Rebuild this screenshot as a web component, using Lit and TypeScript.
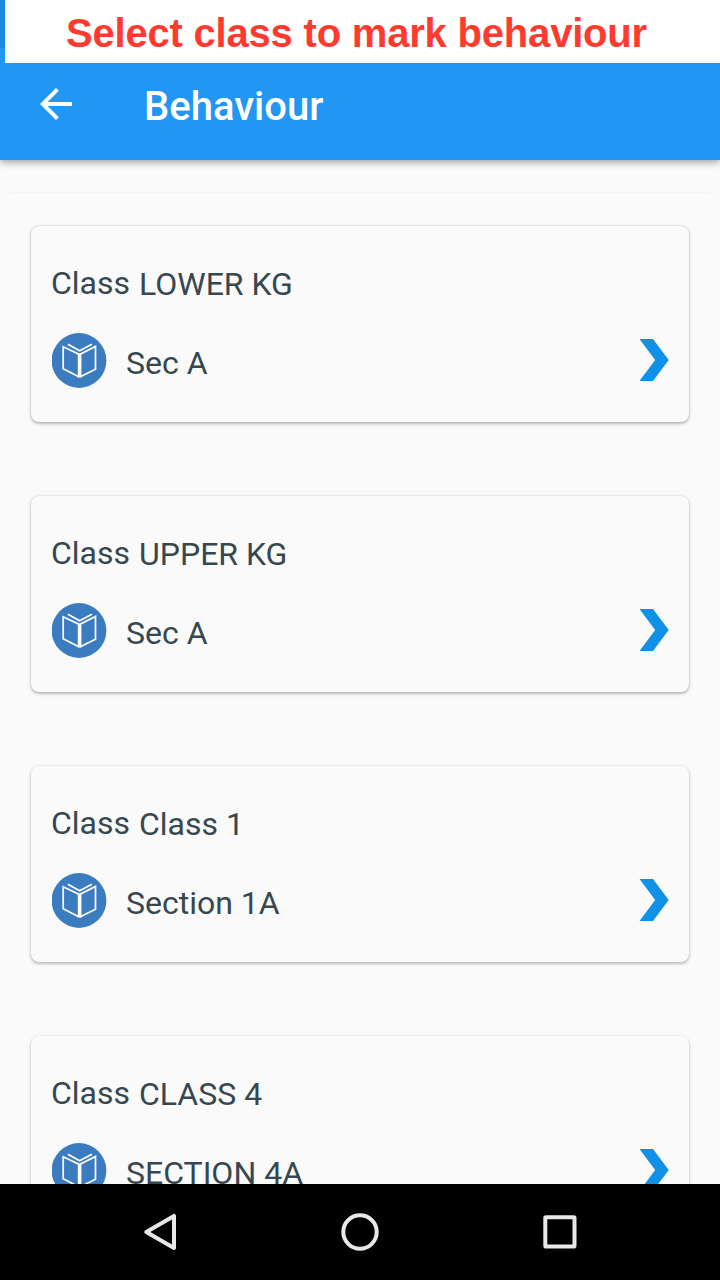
import { LitElement, html, css } from "lit";
import { customElement, property } from "lit/decorators.js";

@customElement("class-card")
export class ClassCard extends LitElement {
  @property() name = "";
  @property() section = "";
  @property({ type: Number }) edge = 0.1;

  static styles = css`
    :host { display: block; flex: none; }
    .card {
      box-sizing: border-box;
      height: 196px;
      padding: 38px 20px 0 20px;
      border-radius: 8px;
      background: #fafafa;
      color: #37474f;
      font: 400 32px/38px Roboto, sans-serif;
      white-space: nowrap;
    }
    .heading { display: flex; height: 39px; }
    .label { width: 88px; }
    .name { padding-top: 1px; }
    .row { display: flex; align-items: flex-start; margin-top: 30px; height: 55px; }
    .book { width: 55px; height: 55px; display: block; margin-left: 1px; }
    .section { flex: 1; padding: 11px 0 0 19px; }
    .chevron { width: 30px; height: 42px; display: block; margin-top: 6px; }
  `;

  render() {
    const shadow = `0 2px 3px rgba(0,0,0,.21), 0 0 2px rgba(0,0,0,${this.edge}), 0 1px 6px rgba(0,0,0,.05)`;
    return html`
      <div class="card" style="box-shadow:${shadow}">
        <div class="heading">
          <span class="label">Class</span><span class="name">${this.name}</span>
        </div>
        <div class="row">
          <svg class="book" viewBox="0 0 55 55">
            <circle cx="27" cy="27.5" r="27.4" fill="#3b7cc1" />
            <g fill="none" stroke="#fff" stroke-width="1.7">
              <path d="M26.8 43.8L11.2 35.8V13.8L27.5 21.6L43.5 13.4V36.2L28.3 43.8" />
              <path d="M15.9 11.3L27.6 17.8L39.9 11.3" />
            </g>
            <path d="M27.6 20.8V44.6" stroke="#fff" stroke-width="3.6" />
          </svg>
          <span class="section">${this.section}</span>
          <svg class="chevron" viewBox="0 0 30 42">
            <path d="M.5 0H14L29.7 21L14 42H.5L16.2 21Z" fill="#1190e7" />
          </svg>
        </div>
      </div>
    `;
  }
}

@customElement("app-root")
export class AppRoot extends LitElement {
  static styles = css`
    :host {
      display: flex;
      flex-direction: column;
      width: 720px;
      height: 1280px;
      overflow: hidden;
      background: #fafafa;
      font-family: Roboto, sans-serif;
    }
    .top {
      flex: none;
      height: 160px;
      background: linear-gradient(#1e88e5 48px, #2196f3 48px);
      box-shadow: 0 3px 6px rgba(0, 0, 0, 0.27), 0 1px 12px rgba(0, 0, 0, 0.07);
      z-index: 1;
    }
    .banner {
      box-sizing: border-box;
      height: 63px;
      margin-left: 5px;
      padding: 10px 0 0 61px;
      background: #fff;
      color: #ff3b30;
      font: bold 40px/46px "Liberation Sans", Arial, sans-serif;
      letter-spacing: -0.2px;
      white-space: nowrap;
    }
    .bar { display: flex; align-items: flex-start; padding: 17px 0 0 32px; }
    .back { width: 48px; height: 48px; display: block; }
    .title {
      margin: 3px 0 0 64px;
      color: #fff;
      font-size: 40px;
      line-height: 47px;
      font-weight: 500;
    }
    .content {
      flex: 1;
      min-height: 0;
      overflow: hidden;
      display: flex;
      flex-direction: column;
    }
    .rule { flex: none; height: 1px; margin: 32px 10px 0; background: #f4f4f4; }
    .list {
      display: flex;
      flex-direction: column;
      gap: 74px;
      padding: 33px 31px 0;
    }
    .nav {
      flex: none;
      height: 96px;
      background: #000;
      display: flex;
      justify-content: center;
      align-items: center;
      gap: 152px;
      z-index: 1;
    }
    .nav svg { width: 48px; height: 48px; display: block; fill: none; stroke: #e8e8e8; stroke-width: 4; stroke-linejoin: round; }
  `;

  private classes = [
    { name: "LOWER KG", section: "Sec A", edge: 0.22 },
    { name: "UPPER KG", section: "Sec A", edge: 0.17 },
    { name: "Class 1", section: "Section 1A", edge: 0.12 },
    { name: "CLASS 4", section: "SECTION 4A", edge: 0.07 },
  ];

  render() {
    return html`
      <header class="top">
        <div class="banner">Select class to mark behaviour</div>
        <div class="bar">
          <svg class="back" viewBox="0 0 24 24">
            <path fill="#fff" d="M20 11H7.83l5.59-5.59L12 4l-8 8 8 8 1.41-1.41L7.83 13H20v-2z" />
          </svg>
          <span class="title">Behaviour</span>
        </div>
      </header>
      <main class="content">
        <div class="rule"></div>
        <div class="list">
          ${this.classes.map(
            (c) => html`<class-card .name=${c.name} .section=${c.section} .edge=${c.edge}></class-card>`
          )}
        </div>
      </main>
      <nav class="nav">
        <svg viewBox="0 0 48 48"><path d="M38 7.9V40.1L10.3 24Z" /></svg>
        <svg viewBox="0 0 48 48"><circle cx="24" cy="24" r="16.7" /></svg>
        <svg viewBox="0 0 48 48"><rect x="9.3" y="9.3" width="29.2" height="29.2" rx="0.8" /></svg>
      </nav>
    `;
  }
}
